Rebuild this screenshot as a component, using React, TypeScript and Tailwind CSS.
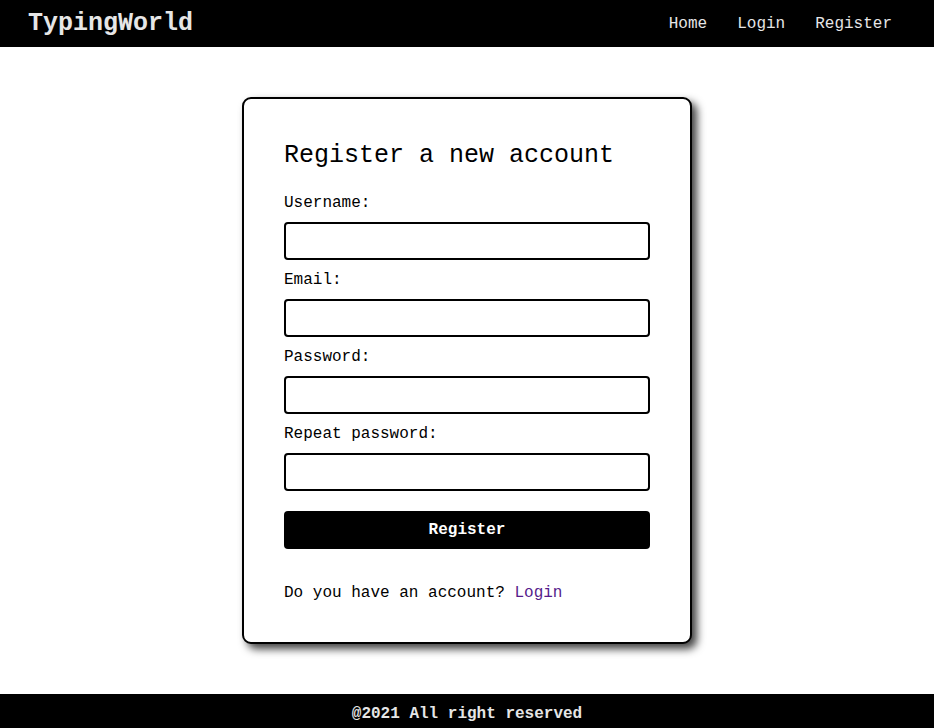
const navLinks = ["Home", "Login", "Register"]

const fields = [
  { id: "username", label: "Username:", type: "text" },
  { id: "email", label: "Email:", type: "email" },
  { id: "password", label: "Password:", type: "password" },
  { id: "repeat", label: "Repeat password:", type: "password" },
]

export default function App() {
  return (
    <div className="flex min-h-screen flex-col bg-white font-['Liberation_Mono',monospace] text-black">
      <header className="flex h-[47px] items-center justify-between bg-black pl-[28px] pr-[42px]">
        <a href="#" className="text-[25px] font-bold leading-none text-[#e6e6e6]">
          TypingWorld
        </a>
        <nav className="flex items-center gap-[30px]">
          {navLinks.map((link) => (
            <a key={link} href="#" className="text-[16px] leading-none text-[#e6e6e6]">
              {link}
            </a>
          ))}
        </nav>
      </header>

      <main className="flex flex-1 justify-center py-[50px]">
        <form
          onSubmit={(e) => e.preventDefault()}
          className="flex w-[450px] flex-col rounded-[9px] border-2 border-black bg-white p-[40px] shadow-[5px_5px_8px_rgba(0,0,0,0.75)]"
        >
          <h1 className="mt-[3px] mb-[24px] text-[25px] leading-[28px]">Register a new account</h1>
          {fields.map((f) => (
            <div key={f.id} className="flex flex-col">
              <label htmlFor={f.id} className="mb-[10px] text-[16px] leading-[18px]">
                {f.label}
              </label>
              <input
                id={f.id}
                type={f.type}
                className="mb-[11px] h-[38px] w-full rounded-[4px] border-2 border-black px-2 outline-none"
              />
            </div>
          ))}
          <button
            type="submit"
            className="mt-[9px] h-[38px] w-full rounded-[4px] bg-black text-[16px] font-bold text-white"
          >
            Register
          </button>
          <p className="mt-[35px] text-[16px] leading-[18px]">
            Do you have an account?{" "}
            <a href="#" className="text-[#551a8b]">
              Login
            </a>
          </p>
        </form>
      </main>

      <footer className="flex h-[34px] items-center justify-center bg-black pt-[5px]">
        <span className="text-[16px] font-bold text-[#e6e6e6]">@2021 All right reserved</span>
      </footer>
    </div>
  )
}
